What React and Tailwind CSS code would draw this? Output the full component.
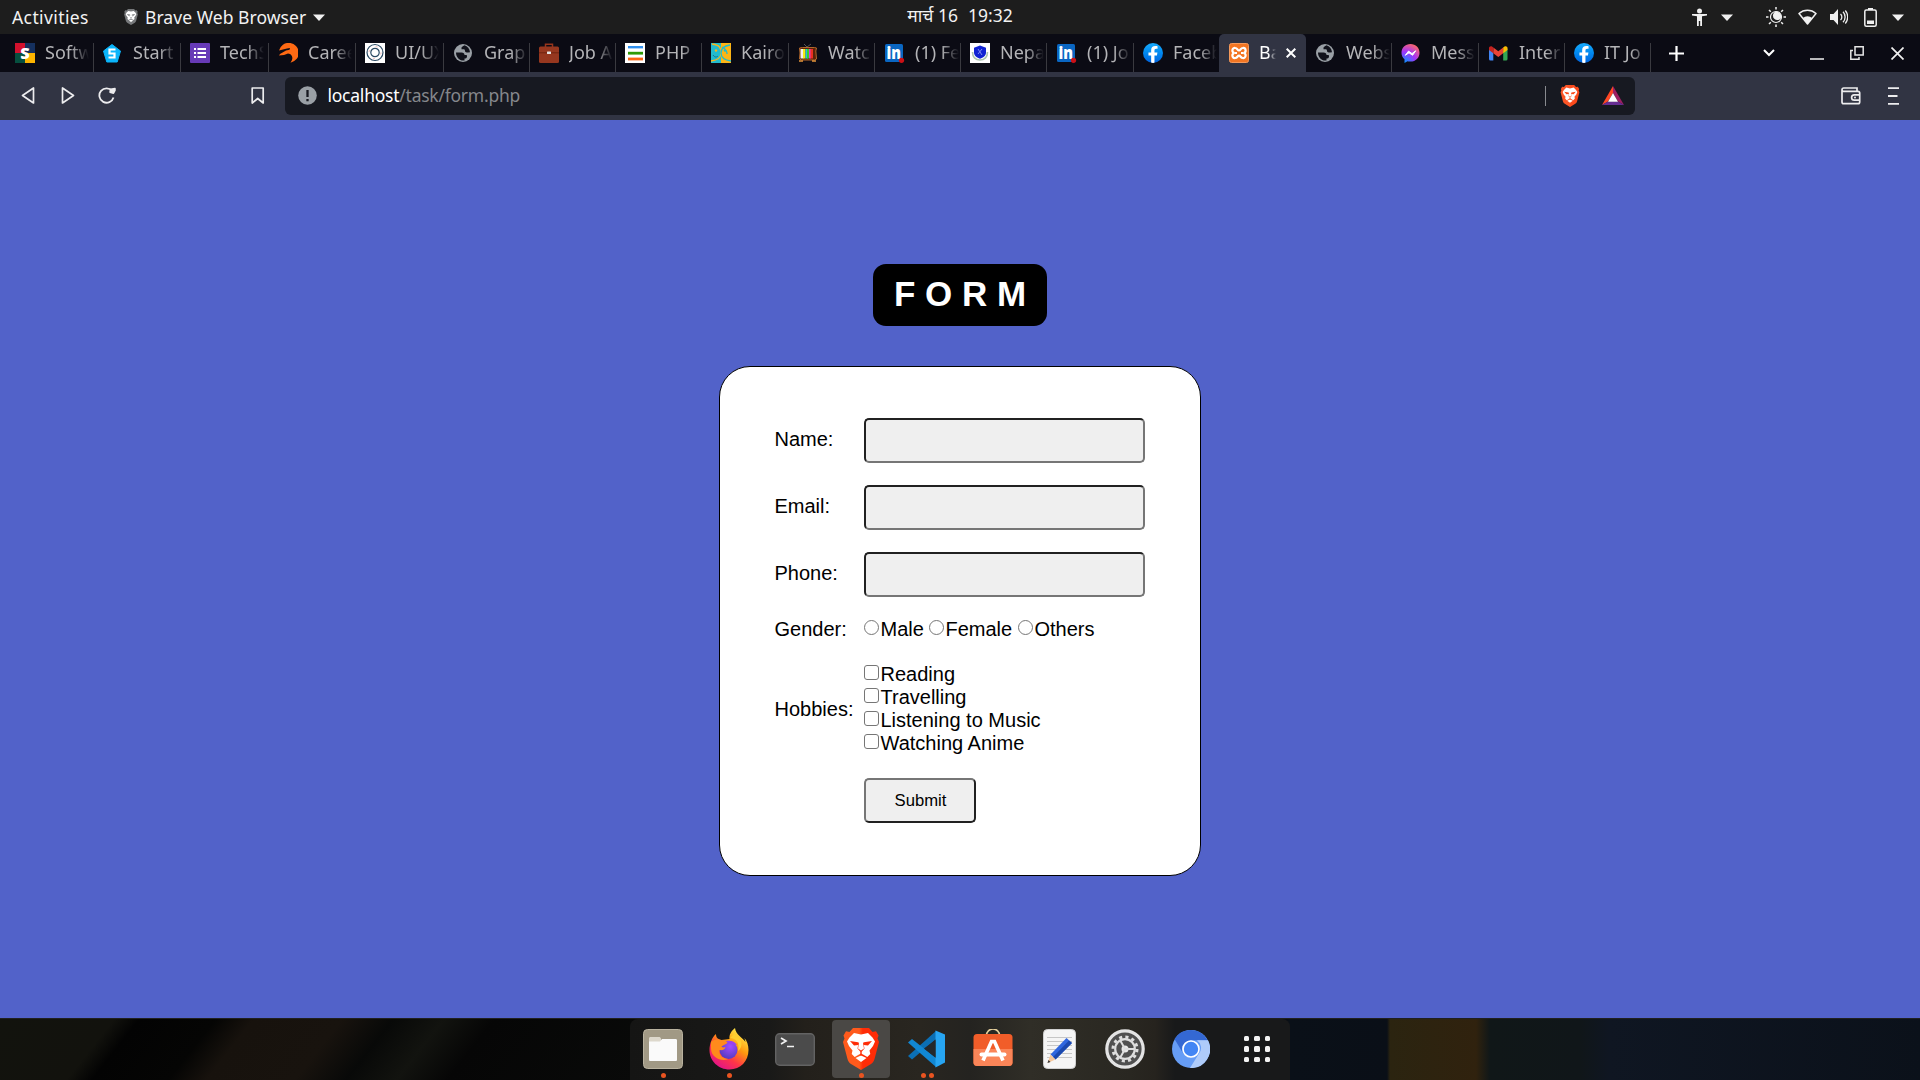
import React from "react";
import { FaFacebookF } from "react-icons/fa";

const Svg = ({ w = 20, h = w, box, className = "", children }) => (
  <svg width={w} height={h} viewBox={box || `0 0 ${w} ${h}`} className={`block shrink-0 ${className}`} fill="none">
    {children}
  </svg>
);

const Lion = ({ w, h, from, to, className }) => (
  <Svg w={w} h={h} box="0 0 36 42" className={className}>
    <defs>
      <linearGradient id={`lion${w}`} x1="0" y1="0" x2="1" y2="0">
        <stop offset=".45" stopColor={from} /><stop offset=".55" stopColor={to} />
      </linearGradient>
    </defs>
    <path d="M10 0h16l3.500 4 3.500-.8 2.500 4.300-1 3 1.500 3.500-4.500 17c-.6 2.300-1.500 3.500-3.500 5L18 42l-10-6c-2-1.500-2.900-2.700-3.500-5L0 14l1.500-3.500-1-3L3 3.200l3.500.8z" fill={`url(#lion${w})`} />
    <path d="M11 5l7 1.500L25 5l4.500 4.500 2.500 4-2 4.500-3.500 4.500.8 3.500-3 3-4.300-2.500L18 25.500l-2 1-4.300 2.500-3-3 .8-3.500L6 18l-2-4.500 2.500-4z" fill="#fff" />
    <path d="M12.500 30l5.500-2.500 5.500 2.500-5.500 4z" fill="#fff" />
    <path d="M7 13l8 1.200c1 .3 1 1 .8 2L15 20.500l3 2 3-2-.8-4.300c-.2-1-.2-1.700.8-2L29 13l-4 4.500-4.200-.5.7 3.500-3.500 4-3.500-4 .7-3.500-4.200.5zM17.300 23h1.400v4.500h-1.400z" fill={to} />
  </Svg>
);

const Globe = () => (
  <Svg>
    <circle cx="9" cy="10" r="9" fill="#9aa0a6" />
    <path d="M2 9.500h5.500c2 0 3 1 3 2.500H12c1 0 1 .6 1 1.500 0 1.700-1.500 2-2.500 2v2c-4.500.8-8.500-3-8.500-8z" fill="#11121b" />
    <path d="M10.500 2.200C9.500 3 8 3.500 7.500 4.500v1.700H10c.8 0 1 1 1 2 .8 1.300 2 1.500 3 1.300l2-.2c-.3-3.800-2.500-6.300-5.500-7.100z" fill="#11121b" />
  </Svg>
);
const Quad = () => (
  <Svg>
    <path fill="#d3112d" d="M0 0h10v10H0z" />
    <path fill="#15305f" d="M10 0h10v10H10z" />
    <path fill="#06503f" d="M0 10h10v10H0z" />
    <path fill="#fdb400" d="M10 10h10v10H10z" />
    <text x="10" y="16" textAnchor="middle" fontSize="16.500" fontWeight="900" fontFamily="Open Sans, sans-serif" fill="#fff">S</text>
  </Svg>
);
const Pentagon = () => (
  <Svg>
    <path d="M9 1.500 17.500 8l-3.300 11H3.800L.5 8z" fill="#0bb5fb" stroke="#0bb5fb" strokeWidth="1" strokeLinejoin="round" />
    <path d="M12.500 6.500H6.500v4h5v4H5.500" stroke="#fff" strokeWidth="2.200" />
  </Svg>
);
const Forms = () => (
  <Svg>
    <rect width="20" height="20" rx="1" fill="#673ab7" />
    <path d="M4 6h2M4 10h2M4 14h2M7.500 6H16M7.500 10H16M7.500 14H16" stroke="#fff" strokeWidth="2" />
  </Svg>
);
const Wolf = () => (
  <Svg>
    <path d="M1 7.500A10 10 0 1 1 12.500 19.700c3-4 2-7-.5-8.700l-2-.5-4 1.500-5 .5 1-1.500 6-3.500 3.500-.8L12 5 9 5.500z" fill="#ff6a13" />
  </Svg>
);
const Rings = () => (
  <Svg>
    <rect width="20" height="20" fill="#fff" />
    <circle cx="10" cy="9.500" r="8" stroke="#2c4a63" strokeWidth="1.200" />
    <circle cx="10" cy="9.500" r="4.200" stroke="#2c4a63" strokeWidth="1.200" />
    <circle cx="10" cy="9.500" r="6" stroke="#e7a2a2" strokeWidth=".8" strokeDasharray="2 7.420" />
  </Svg>
);
const Briefcase = () => (
  <Svg>
    <path d="M6.500 4V1.200h7V4" stroke="#96351c" strokeWidth="1.500" />
    <rect y="3.500" width="20" height="16.500" rx="1.500" fill="#96371f" />
    <path d="M0 9.800h20" stroke="#6f2410" />
    <rect x="8" y="8.500" width="4" height="2.600" rx=".5" fill="#e3e3e3" />
  </Svg>
);
const Lines = () => (
  <Svg>
    <rect width="20" height="20" fill="#fff" />
    <path d="M3 4.200h15" stroke="#2f8fee" strokeWidth="2.400" />
    <path d="M3 10.200h15" stroke="#2f9a06" strokeWidth="2.800" />
    <path d="M3 16h15" stroke="#fb6513" strokeWidth="2.800" />
  </Svg>
);
const Faces = () => (
  <Svg>
    <rect width="10" height="20" fill="#22bbcd" />
    <rect x="10" width="10" height="20" fill="#fdb515" />
    <path d="M1 1c8 1 9 4 9 9s-3 7-10 8" stroke="#fdb515" strokeWidth="1.300" />
    <path d="M19 2c-7 1-9 4-9 8s2 7 10 8M11 4c4 2 5 4 5 7" stroke="#22bbcd" strokeWidth="1.300" />
    <circle cx="5" cy="7.500" r="1.200" fill="#fdb515" />
    <circle cx="14" cy="7.500" r="1.200" fill="#22bbcd" />
    <path d="M2 12c2 3 4 2 5 1" stroke="#14708d" />
  </Svg>
);
const Tv = () => (
  <Svg>
    <path d="M6 1l3 3 4-3" stroke="#555" />
    <path d="M1.500 5l3-.5h12l2 .5-.7 3 .7 8-2 1h-13l-2-1 .5-6z" fill="#5a2308" stroke="#b5692c" />
    <path d="M2.500 6h3v9.500h-3z" fill="#eee" /><path d="M5 6h2.500v9.500H5z" fill="#f4ec13" /><path d="M7.500 6H10v9.500H7.500z" fill="#20c2e0" />
    <path d="M9 6h2v9.500H9z" fill="#33cf2c" /><path d="M11 6h2v9.500h-2z" fill="#e33cc0" /><path d="M12.500 6H15v9.500h-2.500z" fill="#ea3021" />
    <path d="M1 18h4M14 18h4" stroke="#e5953a" strokeWidth="1.500" />
  </Svg>
);
const LinkedIn = () => (
  <Svg>
    <rect y="1" width="18" height="18" rx="1.500" fill="#0a66c2" />
    <text x="1.500" y="16" fontSize="17" fontWeight="800" fontFamily="Open Sans, sans-serif" fill="#fff" textLength="14.500" lengthAdjust="spacingAndGlyphs">in</text>
    <circle cx="16.500" cy="17.300" r="2.600" fill="#cc1016" />
  </Svg>
);
const Crest = () => (
  <Svg>
    <rect width="20" height="20" fill="#fff" />
    <path d="M2.500 9c0 5 3 8 7.500 8s7.500-3 7.500-8" stroke="#a9c3ae" strokeWidth="1.600" />
    <path d="M10 2.500l6 2.200v5c0 3-3 5-6 6-3-1-6-3-6-6v-5z" fill="#1022d3" />
    <path d="M8 6l4 6M12 6l-4 5" stroke="#7f8cf0" />
  </Svg>
);
const Facebook = () => (
  <span className="grid size-5 shrink-0 place-items-end justify-center overflow-hidden rounded-full bg-gradient-to-b from-[#18acfe] to-[#0163e0]">
    <FaFacebookF className="h-[17px] w-[14px] text-white" />
  </span>
);
const Xampp = () => (
  <Svg>
    <rect x=".5" y=".5" width="19" height="19" rx="2" fill="#f37623" stroke="#f59a5c" />
    <path d="M6.300 5c2.200 0 2 2.500 3.700 2.500S11.500 5 13.700 5a2.500 2.500 0 0 1 .8 5 2.500 2.500 0 0 1-.8 5c-2.200 0-2-2.300-3.700-2.300S8.500 15 6.300 15a2.500 2.500 0 0 1-.8-5 2.500 2.500 0 0 1 .8-5z" stroke="#fff" strokeWidth="2.200" />
    <path d="M5.500 10H8M12 10h2.500" stroke="#fff" strokeWidth="2" />
  </Svg>
);
const Messenger = () => (
  <Svg>
    <defs>
      <radialGradient id="msg" cx=".2" cy="1" r="1.100">
        <stop offset="0" stopColor="#0695ff" /><stop offset=".55" stopColor="#a334fa" /><stop offset="1" stopColor="#ff6968" />
      </radialGradient>
    </defs>
    <path d="M9.500 1C4.200 1 .5 4.800.5 9.800c0 2.700 1.200 5 3 6.500V20l3-1.800c1 .3 1.700.4 3 .4 5.300 0 9-3.800 9-8.800S14.800 1 9.500 1z" fill="url(#msg)" />
    <path d="M4.300 12.300l3.200-4.200 3.500 2.500 3.700-2.800-3.100 4.500L8 9.800z" fill="#fff" stroke="#fff" strokeLinejoin="round" />
  </Svg>
);
const Gmail = () => (
  <Svg>
    <path d="M0 5.500 4.300 8v9.500H1.500A1.500 1.500 0 0 1 0 16z" fill="#4285f4" />
    <path d="M18.500 5.500 14.200 8v9.500H17a1.500 1.500 0 0 0 1.500-1.500z" fill="#34a853" />
    <path d="M4.300 4.500l5 3.800 4.900-3.800v5.700l-4.900 3.700-5-3.700z" fill="#ea4335" />
    <path d="M14.200 4.500l1.300-1c1.300-.9 3 0 3 1.500v2l-4.300 3.200z" fill="#fbbc04" />
    <path d="M4.300 4.500 3 3.500C1.700 2.600 0 3.500 0 5v2l4.300 3.200z" fill="#c5221f" />
  </Svg>
);

const tabs = [
  { icon: Quad, label: "Softw", w: "w-[88px]" },
  { icon: Pentagon, label: "Start", w: "w-[87px]" },
  { icon: Forms, label: "TechS", w: "w-[88px]" },
  { icon: Wolf, label: "Caree", w: "w-[87px]" },
  { icon: Rings, label: "UI/UX", w: "w-[88px]" },
  { icon: Globe, label: "Grap", w: "w-[86px]", pad: "pl-[10px]" },
  { icon: Briefcase, label: "Job A", w: "w-[86px]" },
  { icon: Lines, label: "PHP", w: "w-[86px]" },
  { icon: Faces, label: "Kairo", w: "w-[87px]" },
  { icon: Tv, label: "Watc", w: "w-[86px]" },
  { icon: LinkedIn, label: "(1) Fe", w: "w-[86px]", pad: "pl-[10px]" },
  { icon: Crest, label: "Nepa", w: "w-[86px]" },
  { icon: LinkedIn, label: "(1) Jo", w: "w-[87px]", pad: "pl-[10px]" },
  { icon: Facebook, label: "Faceb", w: "w-[85px]" },
  { icon: Xampp, label: "Ba", w: "w-[87px]", active: true },
  { icon: Globe, label: "Webs", w: "w-[86px]", pad: "pl-[10px]" },
  { icon: Messenger, label: "Mess", w: "w-[87px]" },
  { icon: Gmail, label: "Inter", w: "w-[86px]", pad: "pl-[10px]" },
  { icon: Facebook, label: "IT Jo", w: "w-[86px]" },
];

const Tab = ({ icon: Icon, label, w, active, last, pad = "pl-[9px]" }) =>
  active ? (
    <div className={`flex h-[38px] shrink-0 items-start rounded-t-[5px] bg-[#313443] pt-[9px] pl-[10px] ${w}`}>
      <Icon />
      <span className="mt-[-3px] ml-[10px] w-[17px] overflow-hidden text-[18px] leading-[25px] whitespace-nowrap text-white [mask-image:linear-gradient(to_right,black_55%,transparent)]">{label}</span>
      <Svg w={10} className="mt-[5px] ml-[10px]"><path d="M.7.7l8.600 8.600M9.300.7.7 9.300" stroke="#fff" strokeWidth="2" /></Svg>
    </div>
  ) : (
    <div className={`flex h-[29px] shrink-0 items-start ${pad} ${w} ${last ? "" : "border-r border-[#3a3a40]"}`}>
      <Icon />
      <span className="mt-[-3px] ml-[10px] w-[44px] overflow-hidden text-[18px] leading-[25px] whitespace-nowrap text-[#b4b4b7] [mask-image:linear-gradient(to_right,black_60%,transparent)]">{label}</span>
    </div>
  );

const Caret = ({ className }) => (
  <Svg w={12} h={7} className={className}><path d="M0 .5h12L6 7z" fill="#f0f0f0" /></Svg>
);

const TopBar = () => (
  <header className="grid h-[34px] grid-cols-[1fr_auto_1fr] bg-[#1d1d1d] text-[17.500px] leading-[34px] text-[#f2f2f2]">
    <div className="flex items-center pl-3">
      <span className="w-[112px] tracking-[0.4px]">Activities</span>
      <Lion w={14} h={16} from="#77797b" to="#77797b" />
      <span className="ml-[7px] tracking-[0.06px]">Brave Web Browser</span>
      <Caret className="ml-[7px]" />
    </div>
    <div className="flex gap-[10px] text-[17.500px] leading-[31px]"><span>मार्च 16</span><span>19:32</span></div>
    <div className="flex items-center justify-end pr-4">
      <Svg w={15} h={18}><circle cx="7.500" cy="3" r="2.500" fill="#f0f0f0" /><path d="M0 6h15v1.500l-5 .8V18H8.200v-5H6.800v5H5V8.300L0 7.500z" fill="#f0f0f0" /></Svg>
      <Caret className="ml-[14px]" />
      <Svg w={20} className="ml-[33px]">
        <path d="M10 0v2.500M10 17.500V20M0 10h2.500M17.500 10H20M3 3l1.800 1.800M15.200 15.200 17 17M3 17l1.800-1.800M17 3l-1.800 1.800" stroke="#f0f0f0" strokeWidth="1.500" />
        <circle cx="10" cy="10" r="5.500" stroke="#f0f0f0" strokeWidth="1.200" />
        <path d="M9.500 4.500a4.500 4.500 0 1 0 6 6A5.700 5.700 0 0 0 9.500 4.500z" fill="#f0f0f0" />
      </Svg>
      <Svg w={19} h={16} className="ml-[12px]">
        <path d="M1 4.500a13 13 0 0 1 17 0L9.500 15z" stroke="#f0f0f0" strokeWidth="1.500" strokeLinejoin="round" />
        <path d="M4.800 9a7 7 0 0 1 9.400 0L9.500 15z" fill="#f0f0f0" />
      </Svg>
      <Svg w={18} h={16} className="ml-[13px]">
        <path d="M0 5h3.500L8 0v16l-4.500-5H0z" fill="#f0f0f0" />
        <path d="M10.500 5a4 4 0 0 1 0 6M13 2.800a7.500 7.500 0 0 1 0 10.400M15.300 1.500a10 10 0 0 1 0 13" stroke="#f0f0f0" strokeWidth="1.300" />
      </Svg>
      <Svg w={13} h={19} className="ml-[16px]">
        <rect x=".8" y="2" width="11.400" height="16.200" rx="1.500" stroke="#f0f0f0" strokeWidth="1.500" />
        <path d="M4 0h5v2H4zM3 12.500h7V16H3z" fill="#f0f0f0" />
      </Svg>
      <Caret className="ml-[15px]" />
    </div>
  </header>
);

const TabStrip = () => (
  <div className="flex h-[38px] items-end bg-[#0b0b14] pl-[6px]">
    {tabs.map((t, i) => <Tab key={i} {...t} last={i === 13} />)}
    <div className="flex h-[38px] grow items-center justify-end pr-4">
      <Svg w={15}><path d="M7.500 0v15M0 7.500h15" stroke="#fff" strokeWidth="2.200" /></Svg>
      <Svg w={12} h={8} className="ml-[79px]"><path d="M1 1l5 5 5-5" stroke="#fff" strokeWidth="2" /></Svg>
      <Svg w={14} h={14} className="ml-[35px]"><path d="M0 13h14" stroke="#e6e6e6" strokeWidth="1.600" /></Svg>
      <Svg w={14} h={14} className="ml-[26px]"><path d="M5 .8h8.200V9H5zM3 4.500H.8v8.700H9V11" stroke="#e6e6e6" strokeWidth="1.500" /></Svg>
      <Svg w={13} className="ml-[27px]"><path d="M.5.5l12 12M12.500.5l-12 12" stroke="#f0f0f0" strokeWidth="1.700" /></Svg>
    </div>
  </div>
);

const Toolbar = () => (
  <div className="flex h-12 items-center bg-[#313443] pb-px pl-[21px]">
    <Svg w={14} h={17}><path d="M12.500 1v15L1.500 8.500z" stroke="#ececee" strokeWidth="1.700" strokeLinejoin="round" /></Svg>
    <Svg w={14} h={17} className="ml-[26px]"><path d="M1.500 1v15l11-7.500z" stroke="#ececee" strokeWidth="1.700" strokeLinejoin="round" /></Svg>
    <Svg w={18} h={17} className="ml-[23px]">
      <path d="M14.200 4A7.200 7.200 0 1 0 15.500 10.500" stroke="#ececee" strokeWidth="1.800" />
      <path d="M12.500 2.200 17 1.500v2l-1.500 2.700-3.500-1z" fill="#ececee" stroke="#ececee" strokeWidth="1.500" strokeLinejoin="round" />
    </Svg>
    <Svg w={14} h={17} className="ml-[135px]"><path d="M1.200 1h11v15l-5.500-4.500L1.200 16z" stroke="#ececee" strokeWidth="1.700" strokeLinejoin="round" /></Svg>
    <div className="mt-px ml-[20px] flex h-[38px] w-[1350px] items-center rounded-md bg-[#171921] pr-[11px] pb-px pl-[13px]">
      <Svg w={19}><circle cx="9.500" cy="9.500" r="9.300" fill="#9aa0a6" /><path d="M9.500 4v7M9.500 13v2.300" stroke="#171921" strokeWidth="2.300" /></Svg>
      <span className="ml-[10.500px] text-[17.500px] tracking-[-0.240px] text-[#85878c]"><span className="text-white">localhost</span>/task/form.php</span>
      <span className="ml-auto h-5 w-px bg-[#888a8f]" />
      <Lion w={20} h={22} from="#fb5426" to="#fb4a1c" className="ml-[14px]" />
      <Svg w={22} h={19} className="ml-[22px]">
        <path d="M11 0v7l-5 8.500L0 19z" fill="#ff4724" />
        <path d="M11 0l11 19-6-3.500L11 7z" fill="#9e1f63" />
        <path d="M0 19l6-3.500h10l6 3.500z" fill="#662d91" />
        <path d="M11 7l5 8.700H6z" fill="#fff" />
      </Svg>
    </div>
    <Svg w={20} h={18} className="ml-auto">
      <path d="M1 3v12c0 1 .6 1.700 1.700 1.700H17c1 0 1.700-.7 1.700-1.700V6c0-1-.7-1.700-1.700-1.700H2.700C1.600 4.300 1 3.600 1 2.700S1.700 1 2.700 1H16v3" stroke="#ececee" strokeWidth="1.700" />
      <path d="M19 7.800h-5.700a2.700 2.700 0 0 0 0 5.400H19" stroke="#ececee" strokeWidth="1.700" />
      <circle cx="14" cy="10.500" r="1" fill="#ececee" />
    </Svg>
    <Svg w={12} h={18} className="mr-[21px] ml-[26px]"><path d="M1 1.200h11M1 9h9.500M1 16.800h11" stroke="#ececee" strokeWidth="1.800" /></Svg>
  </div>
);

const Field = ({ label }) => (
  <div className="mb-[22px] flex h-[45px] items-start">
    <label className="mt-[10px] w-[90px] pl-[0.500px]">{label}</label>
    <input className="h-[45px] w-[281px] rounded-[5px] border-2 border-t-[#212121] border-r-[#767676] border-b-[#767676] border-l-[#212121] bg-[#efefef] px-3 outline-none" />
  </div>
);

const Radio = ({ label, className }) => (
  <label className={`flex ${className}`}>
    <input type="radio" name="gender" className="mt-[2px] mr-[1.500px] size-[15px] shrink-0 appearance-none rounded-full border border-[#767676] bg-white" />
    {label}
  </label>
);

const Page = () => (
  <main className="flex h-[898px] flex-col items-center bg-[#5262c9] pt-[144px] font-['Liberation_Sans',Arial,sans-serif] text-black">
    <h1 className="h-[62px] w-[174px] rounded-[13px] bg-black pt-[10px] text-center text-[35px] leading-10 font-bold text-white">F O R M</h1>
    <form className="mt-10 h-[510px] w-[482px] rounded-[31px] border border-black bg-white pt-[51px] pl-[54px] text-[20px] leading-[23px]">
      <Field label="Name:" />
      <Field label="Email:" />
      <Field label="Phone:" />
      <div className="mt-[-1px] flex">
        <span className="w-[90px] pl-[0.500px]">Gender:</span>
        <Radio label="Male" className="w-[65px]" />
        <Radio label="Female" className="w-[89px]" />
        <Radio label="Others" className="" />
      </div>
      <div className="mt-[22px] flex items-start">
        <span className="mt-[35px] w-[90px] pl-[0.500px]">Hobbies:</span>
        <div>
          {["Reading", "Travelling", "Listening to Music", "Watching Anime"].map((h) => (
            <label key={h} className="flex h-[23px]">
              <input type="checkbox" className="mt-[2px] mr-[1.500px] size-[15px] shrink-0 appearance-none rounded-[3px] border border-[#767676] bg-white" />
              {h}
            </label>
          ))}
        </div>
      </div>
      <button type="button" className="mt-[23px] ml-[90px] block h-[45px] w-[112px] rounded-[5px] border-2 border-t-[#767676] border-r-[#212121] border-b-[#212121] border-l-[#767676] bg-[#efefef] pl-px text-[16.670px] leading-5">Submit</button>
    </form>
  </main>
);

const Files = () => (
  <Svg w={40}>
    <rect x=".5" y=".5" width="39" height="39" rx="4" fill="#a19985" stroke="#b9b29f" />
    <path d="M6 11V9.500C6 8.500 6.700 8 7.500 8H16c1 0 1.500.5 2 1.500V14H6z" fill="#ddd8cc" />
    <path d="M6 12.500h11l2-2.500h13.500c1 0 1.500.5 1.500 1.500v19c0 1-.5 1.500-1.500 1.500h-25c-1 0-1.500-.5-1.500-1.500z" fill="#fafafa" />
  </Svg>
);
const Firefox = () => (
  <Svg w={42}>
    <defs>
      <linearGradient id="ff1" x1=".85" y1=".05" x2=".25" y2=".95"><stop offset="0" stopColor="#fff44f" /><stop offset=".4" stopColor="#ff980e" /><stop offset=".7" stopColor="#ff3647" /><stop offset="1" stopColor="#e31587" /></linearGradient>
      <radialGradient id="ff2" cx=".6" cy=".3" r=".8"><stop offset="0" stopColor="#a24cff" /><stop offset="1" stopColor="#4b3ab8" /></radialGradient>
    </defs>
    <path d="M27 0c-4 3-6 7-5.500 11l-8 1C9 11 8 9 8 6 4 9 1.500 16 1.500 22c0 11 9 19.500 20 19.500S40.500 33 40.500 22c0-5-1.500-9-4-12l1 4C34 9 28 7 27 0z" fill="url(#ff1)" />
    <path d="M22 10c6 0 10 5 8 13 5-4 4-10 1-13l-4-5z" fill="#ffce2f" />
    <circle cx="20.500" cy="22" r="9" fill="url(#ff2)" />
    <path d="M3 14c3-3 7-3 10-2 3 0 5 1 6.500 2.500-1 2-5 2.500-6 4.500 1.500.5 3 .5 4 0-.5 3-4 3.500-6 3-1 5 4 9 9 9-7 3-17-1-17.500-10z" fill="#ff8a1c" />
    <path d="M18 13c4-1 9 0 11 4l-5-1z" fill="#9b3ff0" />
  </Svg>
);
const Terminal = () => (
  <Svg w={40} h={33}>
    <rect x=".7" y=".7" width="38.600" height="31.600" rx="4" fill="#4b4b4b" stroke="#636363" strokeWidth="1.400" />
    <path d="M6 5l5 3-5 3M12 13.500h7" stroke="#f2f2f2" strokeWidth="1.700" />
  </Svg>
);
const BraveDock = () => <Lion w={36} h={42} from="#ff5a1c" to="#ff2c06" />;
const Code = () => (
  <Svg w={38} h={38}>
    <path d="M0 26l4 3.500L28 9V1z" fill="#0b6fb5" />
    <path d="M0 12.500 4 9l24 19v9z" fill="#1187d3" />
    <path d="M27.500.5 37 4.500v28l-9.500 5z" fill="#27a5f2" />
    <path d="M16 18.500 27.500 10v17.500z" fill="#24282c" />
  </Svg>
);
const Software = () => (
  <Svg w={40} h={40}>
    <path d="M13.500 9V6.500a6.500 6.500 0 0 1 13 0V9" stroke="#e5cf9c" strokeWidth="1.600" />
    <rect x=".5" y="5" width="39" height="32" rx="3.500" fill="#f15d29" />
    <path d="M.5 20h39v13.500c0 2-1.500 3.500-3.500 3.500H4c-2 0-3.500-1.500-3.500-3.500z" fill="#fa8558" />
    <path d="M10 31.500l8.500-19h3l8.500 19" stroke="#fff" strokeWidth="3.600" />
    <path d="M8.500 25.500h23" stroke="#fff" strokeWidth="4" strokeLinecap="round" />
  </Svg>
);
const Editor = () => (
  <Svg w={33} h={40}>
    <rect x=".5" y=".5" width="32" height="39" rx="4" fill="#f5f5f5" stroke="#d0d0d0" />
    <path d="M4 8.500h25M4 12.500h25M4 16.500h25M4 20.500h25M4 24.500h25M4 28.500h25" stroke="#c6c6c6" />
    <path d="M23.500 9l5.500 5-16.500 16.500-5-5z" fill="#2f66df" />
    <path d="M26 11.500l3 2.500-16.500 16.500-2.500-2.500z" fill="#1b48ad" />
    <path d="M7.500 25.500l5 5-8 3.500z" fill="#f5c79c" /><path d="M5.500 31l2 2-3 1z" fill="#333" />
  </Svg>
);
const Settings = () => (
  <Svg w={40}>
    <circle cx="20" cy="20" r="18.200" fill="#505050" stroke="#e4e4e4" strokeWidth="3.200" />
    <circle cx="20" cy="20" r="12" stroke="#dedede" strokeWidth="3" strokeDasharray="3.100 3.183" />
    <circle cx="20" cy="20" r="9.800" stroke="#dedede" strokeWidth="2.200" />
    <circle cx="20" cy="20" r="3.500" fill="#e8e8e8" />
    <path d="M20 20h10M20 20l-5-9M20 20l-5 9" stroke="#dedede" strokeWidth="2" />
  </Svg>
);
const Chromium = () => (
  <Svg w={38}>
    <circle cx="19" cy="19" r="19" fill="#669df6" />
    <path d="M19 0a19 19 0 0 1 16.500 10.300H19a9 9 0 0 0-8 13L2.500 9A19 19 0 0 1 19 0z" fill="#3468d3" />
    <path d="M36 10.300A19 19 0 0 1 18 38l9-14.500a9 9 0 0 0-2-13.200z" fill="#aecbfa" />
    <circle cx="19" cy="19" r="8" fill="#4285f4" stroke="#fff" strokeWidth="1.600" />
  </Svg>
);
const Apps = () => (
  <div className="grid grid-cols-3 gap-[5px]">
    {Array.from({ length: 9 }, (_, i) => <span key={i} className="size-[5.500px] rounded-[1.500px] bg-[#f4f4f4]" />)}
  </div>
);

const dock = [
  { icon: Files, dots: 1 },
  { icon: Firefox, dots: 1 },
  { icon: Terminal, dots: 0 },
  { icon: BraveDock, dots: 1, active: true },
  { icon: Code, dots: 2 },
  { icon: Software, dots: 0 },
  { icon: Editor, dots: 0 },
  { icon: Settings, dots: 0 },
  { icon: Chromium, dots: 0 },
  { icon: Apps, dots: 0 },
];

const Dock = () => (
  <footer className="flex h-[62px] justify-center border-t border-[#20201f] bg-[linear-gradient(90deg,transparent_0_1280px,#0a1018_1290px,#0a0f17_1387px,#2b2410_1390px,#30220e_1476px,#101718_1490px,#101619_1580px,#0f1622_1610px,#0b111a_1920px),linear-gradient(128deg,#12130d_0,#12120d_90px,#030303_110px,#050504_170px,#17120d_200px,#18130e_270px,#080908_310px,#12130f_350px,#060606_390px,#090a09_540px,#131511_580px,#070909_630px,#080a0a_800px)]">
    <div className="flex h-[61px] w-[660px] rounded-t-lg bg-[linear-gradient(90deg,#151514_0,#191918_140px,#23201b_175px,#292620_290px,#242320_340px,#302e27_400px,#292721_500px,#26231e_525px,#18191a_545px,#18191a_100%)]">
      {dock.map(({ icon: Icon, dots, active }, i) => (
        <div key={i} className="flex h-[61px] w-[66px] justify-center pt-[1px]">
          <div className={`relative grid h-[58px] w-[58px] place-items-center rounded ${active ? "bg-[#4a4845]" : ""}`}>
            <Icon />
            <span className="absolute bottom-0 flex gap-[3px]">
              {Array.from({ length: dots }, (_, d) => <span key={d} className="size-[5px] rounded-full bg-[#e95420]" />)}
            </span>
          </div>
        </div>
      ))}
    </div>
  </footer>
);

export default function App() {
  return (
    <div className="h-[1080px] w-[1920px] overflow-hidden font-['Noto_Sans','Open_Sans',sans-serif]">
      <TopBar />
      <TabStrip />
      <Toolbar />
      <Page />
      <Dock />
    </div>
  );
}
